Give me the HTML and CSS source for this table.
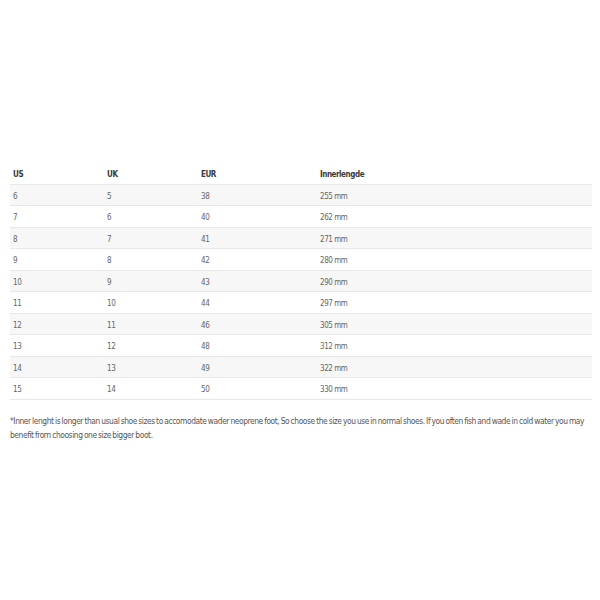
FILE: index.html
```html
<!DOCTYPE html>
<html>
<head>
<meta charset="utf-8">
<link rel="stylesheet" href="styles.css">
</head>
<body>
<div class="wrap">
<table class="sizes">
<colgroup><col class="c1"><col class="c2"><col class="c3"><col></colgroup>
<thead>
<tr><th>US</th><th>UK</th><th>EUR</th><th>Innerlengde</th></tr>
</thead>
<tbody>
<tr><td>6</td><td>5</td><td>38</td><td>255 mm</td></tr>
<tr><td>7</td><td>6</td><td>40</td><td>262 mm</td></tr>
<tr><td>8</td><td>7</td><td>41</td><td>271 mm</td></tr>
<tr><td>9</td><td>8</td><td>42</td><td>280 mm</td></tr>
<tr><td>10</td><td>9</td><td>43</td><td>290 mm</td></tr>
<tr><td>11</td><td>10</td><td>44</td><td>297 mm</td></tr>
<tr><td>12</td><td>11</td><td>46</td><td>305 mm</td></tr>
<tr><td>13</td><td>12</td><td>48</td><td>312 mm</td></tr>
<tr><td>14</td><td>13</td><td>49</td><td>322 mm</td></tr>
<tr><td>15</td><td>14</td><td>50</td><td>330 mm</td></tr>
</tbody>
</table>
<p class="note">*Inner lenght is longer than usual shoe sizes to accomodate wader neoprene foot, So choose the size you use in normal shoes. If you often fish and wade in cold water you may benefit from choosing one size bigger boot.</p>
</div>
</body>
</html>
```
FILE: styles.css
```css
html, body {
  margin: 0;
  padding: 0;
  background: #fff;
}
body {
  font-family: "DejaVu Sans Condensed", "Liberation Sans", sans-serif;
  color: #666;
}
.wrap {
  padding: 163px 8px 0 10px;
}
.sizes {
  width: 582px;
  table-layout: fixed;
  border-collapse: collapse;
  font-size: 8px;
  letter-spacing: -0.45px;
}
.sizes th, .sizes td {
  text-align: left;
  padding: 3px 0 0 3px;
  height: 17.5px;
  border-bottom: 1px solid #e8e8e8;
}
.sizes th {
  color: #3a3a3a;
  font-weight: bold;
}
.c1, .c2 { width: 94px; }
.c3 { width: 119px; }
.sizes tbody tr:nth-child(odd) td {
  background: #f7f7f7;
}
.note {
  margin: 14px 0 0 0;
  font-size: 8.4px;
  line-height: 14px;
  letter-spacing: -0.42px;
  word-spacing: -0.6px;
  color: #555;
}
```
